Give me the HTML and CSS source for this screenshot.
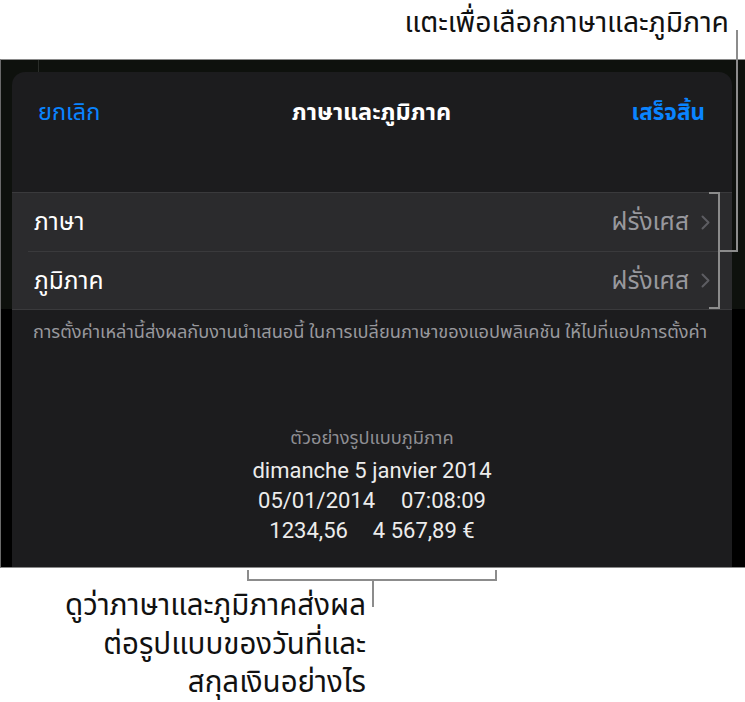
FILE: index.html
```html
<!DOCTYPE html>
<html lang="th">
<head>
<meta charset="utf-8">
<title>ภาษาและภูมิภาค</title>
<link rel="stylesheet" href="styles.css">
</head>
<body>
<div class="page">
  <div class="top-label">แตะเพื่อเลือกภาษาและภูมิภาค</div>
  <div class="screen">
    <div class="split-line"></div>
    <div class="card">
      <div class="nav">
        <span class="nav-btn nav-cancel">ยกเลิก</span>
        <span class="nav-title">ภาษาและภูมิภาค</span>
        <span class="nav-btn nav-done">เสร็จสิ้น</span>
      </div>
      <div class="group">
        <div class="row">
          <span class="row-label">ภาษา</span>
          <span class="row-value">ฝรั่งเศส</span>
          <svg class="chev" width="9" height="15" viewBox="0 0 9 15"><path d="M1.5 1.5 L7.5 7.5 L1.5 13.5" fill="none" stroke="#5d5d62" stroke-width="2" stroke-linecap="round" stroke-linejoin="round"/></svg>
        </div>
        <div class="row">
          <span class="row-label">ภูมิภาค</span>
          <span class="row-value">ฝรั่งเศส</span>
          <svg class="chev" width="9" height="15" viewBox="0 0 9 15"><path d="M1.5 1.5 L7.5 7.5 L1.5 13.5" fill="none" stroke="#5d5d62" stroke-width="2" stroke-linecap="round" stroke-linejoin="round"/></svg>
        </div>
      </div>
      <p class="footnote">การตั้งค่าเหล่านี้ส่งผลกับงานนำเสนอนี้ ในการเปลี่ยนภาษาของแอปพลิเคชัน ให้ไปที่แอปการตั้งค่า</p>
      <div class="preview">
        <div class="preview-title">ตัวอย่างรูปแบบภูมิภาค</div>
        <div class="preview-line">dimanche 5 janvier 2014</div>
        <div class="preview-line"><span>05/01/2014</span><span class="gap-a">07:08:09</span></div>
        <div class="preview-line"><span>1234,56</span><span class="gap-b">4 567,89 €</span></div>
      </div>
    </div>
  </div>
  <div class="bottom-label">ดูว่าภาษาและภูมิภาคส่งผล<br>ต่อรูปแบบของวันที่และ<br>สกุลเงินอย่างไร</div>

  <div class="callout c-right-stem"></div>
  <div class="callout c-right-arm"></div>
  <div class="callout c-bracket-right"></div>
  <div class="callout c-bracket-bottom"></div>
  <div class="callout c-bottom-stem"></div>
</div>
</body>
</html>
```
FILE: styles.css
```css
* { box-sizing: border-box; }
html, body {
  margin: 0;
  padding: 0;
  background: #ffffff;
}
body {
  font-family: Roboto, "Noto Sans Thai", "Noto Sans", sans-serif;
  -webkit-font-smoothing: antialiased;
}
.page {
  position: relative;
  width: 745px;
  height: 702px;
  overflow: hidden;
}
.top-label {
  height: 59px;
  padding: 6px 16px 0 0;
  text-align: right;
  font-size: 28.3px;
  line-height: 34px;
  color: #111111;
  white-space: nowrap;
}
.screen {
  position: relative;
  height: 509px;
  border-top: 1px solid #8a8a8a;
  border-bottom: 1px solid #8a8a8a;
  border-left: 1px solid #6a6a6a;
  background: linear-gradient(to bottom, #0e110d 0, #0e110d 249px, #000000 249px);
  padding: 12px 13px 0 11px;
}
.split-line {
  position: absolute;
  left: 37px;
  top: 0;
  width: 1px;
  height: 12px;
  background: #2a2d29;
}
.card {
  height: 100%;
  background: #1c1c1e;
  border-radius: 13px 13px 0 0;
}
.nav {
  height: 80px;
  display: grid;
  grid-template-columns: 1fr auto 1fr;
  align-items: center;
  padding: 0 27px 0 26px;
  font-size: 23.5px;
  line-height: 30px;
}
.nav-btn {
  color: #0a84ff;
}
.nav-cancel {
  justify-self: start;
}
.nav-done {
  justify-self: end;
  font-weight: 700;
  font-size: 22.5px;
}
.nav-title {
  color: #ffffff;
  font-weight: 700;
}
.group {
  margin-top: 40px;
  background: #2b2b2d;
  border-top: 1px solid #3a3a3c;
  border-bottom: 1px solid #3a3a3c;
}
.row {
  height: 58px;
  display: flex;
  align-items: center;
  padding: 0 22px 0 22px;
  font-size: 24.5px;
  line-height: 30px;
}
.row + .row {
  border-top: 1px solid #3a3a3c;
  margin-left: 16px;
  padding-left: 6px;
}
.row-label {
  color: #ffffff;
  flex: 1;
}
.row-value {
  color: #98989d;
  margin-right: 12px;
}
.chev {
  display: block;
}
.footnote {
  margin: 0;
  padding: 10px 8px 0 21px;
  font-size: 18.2px;
  line-height: 24px;
  color: #98989d;
  white-space: nowrap;
}
.preview {
  margin-top: 83px;
  text-align: center;
}
.preview-title {
  font-size: 18.3px;
  line-height: 22px;
  color: #8e8e93;
  margin-bottom: 7px;
}
.preview-line {
  font-size: 22px;
  line-height: 30px;
  color: #ececec;
}
.gap-a {
  margin-left: 26px;
}
.gap-b {
  margin-left: 25px;
}
.bottom-label {
  width: 366px;
  padding-top: 18px;
  text-align: right;
  font-size: 29.5px;
  line-height: 38.5px;
  color: #111111;
  white-space: nowrap;
}
.callout {
  position: absolute;
  background: #8c8c8c;
}
.c-right-stem {
  left: 736px;
  top: 30px;
  width: 2px;
  height: 222px;
}
.c-right-arm {
  left: 718px;
  top: 250px;
  width: 20px;
  height: 2px;
}
.c-bracket-right {
  left: 709px;
  top: 192px;
  width: 11px;
  height: 117px;
  background: transparent;
  border: 2px solid #8c8c8c;
  border-left: none;
}
.c-bracket-bottom {
  left: 247px;
  top: 570px;
  width: 250px;
  height: 11px;
  background: transparent;
  border: 2px solid #8c8c8c;
  border-top: none;
}
.c-bottom-stem {
  left: 372px;
  top: 579px;
  width: 2px;
  height: 28px;
}
```
